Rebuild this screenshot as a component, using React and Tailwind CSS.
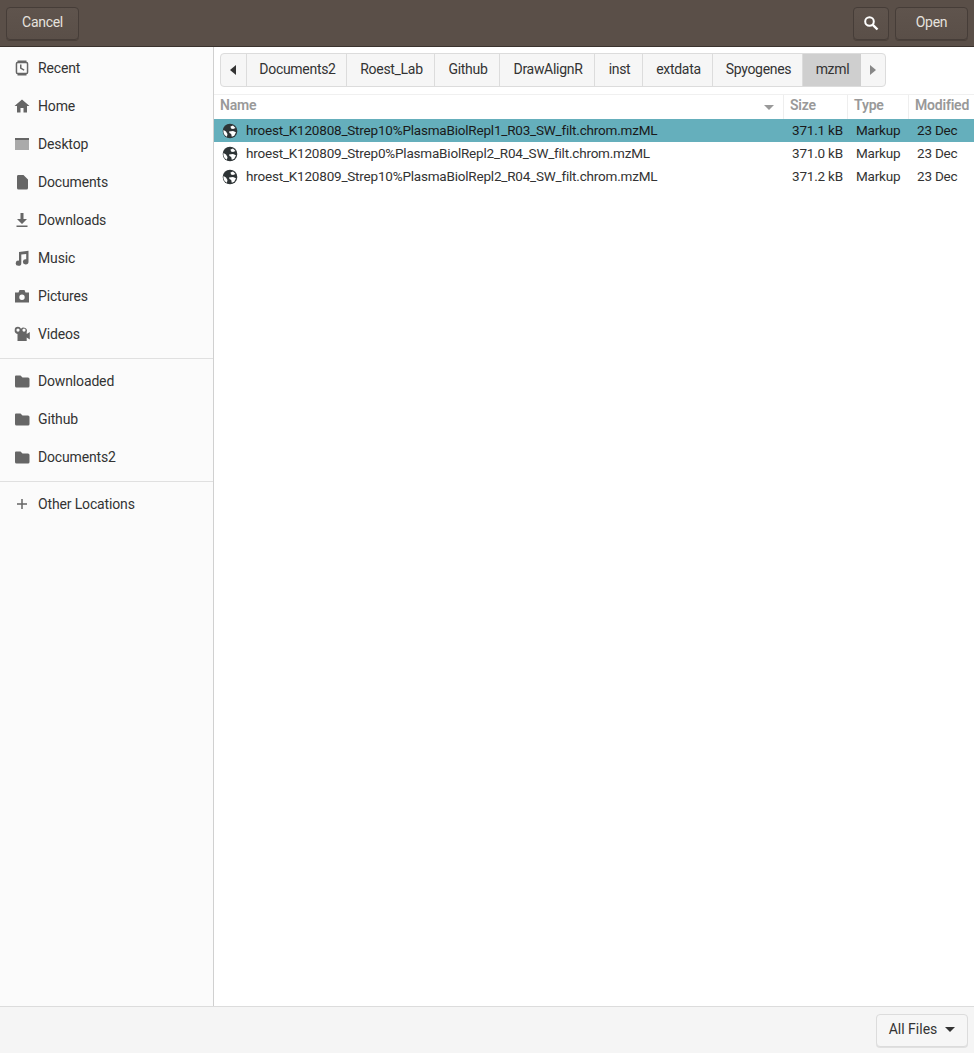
const font = "font-['Roboto','Noto_Sans',sans-serif]";

function Icon({ d, className = 'w-4 h-4 text-[#666]' }) {
  return (
    <svg viewBox="0 0 16 16" className={className} fill="currentColor" fillRule="evenodd">
      <path d={d} />
    </svg>
  );
}

const icons = {
  recent: 'M3.500 0.500h9v1.200a2 2 0 0 1 1.800 2v8.600a2 2 0 0 1-1.800 2v1.200h-9v-1.200a2 2 0 0 1-1.800-2V3.700a2 2 0 0 1 1.800-2zM3.700 3.200a.5.5 0 0 0-.5.5v8.600a.5.5 0 0 0 .5.5h8.600a.5.5 0 0 0 .5-.5V3.700a.5.5 0 0 0-.5-.5zM6 4.500h1.500v3.300l3 1.700-.7 1.200L6 8.600z',
  home: 'M8 1.500 15.500 8H13v6.500H9.500V10h-3v4.500H3V8H.5z',
  document: 'M4 1h5.500L14 5.500V14a1.500 1.500 0 0 1-1.500 1.500h-8A1.500 1.500 0 0 1 3 14V2.500A1.500 1.500 0 0 1 4 1z',
  download: 'M6.500 1h3v6H13l-5 5-5-5h3.500zM2.500 13.500h11V15h-11z',
  music: 'M5 2 14.500 .8v11a2.800 2.600 0 1 1-2.300-2.550V4L7.300 4.600v8.600A2.800 2.600 0 1 1 5 10.650z',
  camera: 'M5.500 2h5l1 2.500H15V14.500H1V4.500h3.500zM8 6.500a2.700 2.700 0 1 0 0 5.400 2.700 2.700 0 0 0 0-5.400z',
  video: 'M4 .8a3.300 3.300 0 0 1 3 2 3.300 3.300 0 0 1 5.700 3.200V8L15.800 6v7.500L12.700 11.500V15H3.500V8A3.500 3.500 0 0 1 .7 4.100 3.300 3.300 0 0 1 4 .8zM4 2.500a1.600 1.600 0 1 0 0 3.200 1.600 1.600 0 0 0 0-3.200zM10 2.500a1.600 1.600 0 1 0 0 3.200 1.600 1.600 0 0 0 0-3.200z',
  folder: 'M2 2.500h4.500L8.500 4.500H14a1.500 1.500 0 0 1 1.500 1.500v7a1.500 1.500 0 0 1-1.500 1.500H2.500A1.500 1.500 0 0 1 1 13V3.500a1 1 0 0 1 1-1z',
  plus: 'M7.250 3h1.500v4.250H13v1.500H8.750V13h-1.500V8.750H3v-1.500h4.250z',
};

function DesktopIcon() {
  return (
    <svg viewBox="0 0 16 16" className="w-4 h-4">
      <rect x="1" y="2" width="14" height="12" fill="#aaaaaa" />
      <rect x="1" y="2" width="14" height="2" fill="#666666" />
    </svg>
  );
}

function Globe() {
  return (
    <svg viewBox="0 0 16 16" className="w-4 h-4 shrink-0">
      <circle cx="8" cy="8" r="7.300" fill="#2e3436" />
      <path d="M8.500 3.500 11 2.500 13.500 5 11 6 9 5.500zM7 8.500 11 8l3 1.200-1.800 3.600-2.400 1-.6-2.800L7.500 10zM1.500 7 4 8.500l1.500 2.500-.6 2.800A6.500 6.500 0 0 1 1.500 7z" fill="#ffffff" />
    </svg>
  );
}

function SearchIcon() {
  return (
    <svg viewBox="0 0 16 16" className="w-4 h-4" fill="none" stroke="#ffffff">
      <circle cx="6.500" cy="6.500" r="4.300" strokeWidth="2" />
      <path d="M9.800 9.800 14.500 14.500" strokeWidth="2.400" />
    </svg>
  );
}

const places = [
  ['Recent', 'recent'],
  ['Home', 'home'],
  ['Desktop', 'desktop'],
  ['Documents', 'document'],
  ['Downloads', 'download'],
  ['Music', 'music'],
  ['Pictures', 'camera'],
  ['Videos', 'video'],
];

const bookmarks = ['Downloaded', 'Github', 'Documents2'];

const crumbs = [
  ['Documents2', 'w-[100px]'],
  ['Roest_Lab', 'w-[88px]'],
  ['Github', 'w-[65px]'],
  ['DrawAlignR', 'w-[95px]'],
  ['inst', 'w-[48px]'],
  ['extdata', 'w-[70px]'],
  ['Spyogenes', 'w-[90px]'],
];

const files = [
  { name: 'hroest_K120808_Strep10%PlasmaBiolRepl1_R03_SW_filt.chrom.mzML', size: '371.1 kB', selected: true },
  { name: 'hroest_K120809_Strep0%PlasmaBiolRepl2_R04_SW_filt.chrom.mzML', size: '371.0 kB' },
  { name: 'hroest_K120809_Strep10%PlasmaBiolRepl2_R04_SW_filt.chrom.mzML', size: '371.2 kB' },
];

function PlaceRow({ label, children }) {
  return (
    <div className="h-[38px] flex items-center pl-[14px] gap-[8px] text-[14px] tracking-[-0.15px] text-[#333]">
      <span className="w-4 h-4 flex items-center justify-center">{children}</span>
      <span>{label}</span>
    </div>
  );
}

function HeaderButton({ children, className = '' }) {
  return (
    <div className={`h-[33px] flex items-center justify-center pb-px rounded-[4px] border border-[#463d38] bg-gradient-to-b from-[#5f544d] to-[#5a4f48] text-[14px] tracking-[-0.3px] text-[#e6e2de] shadow-[0_1px_0_#4a403a] ${className}`}>
      {children}
    </div>
  );
}

export default function App() {
  return (
    <div className={`w-[974px] h-[1053px] flex flex-col bg-white overflow-hidden ${font}`}>
      <header className="h-[47px] shrink-0 flex items-center px-[6px] bg-[#5a4f48] border-b border-[#3a322d]">
        <HeaderButton className="w-[73px]">Cancel</HeaderButton>
        <div className="flex-1" />
        <HeaderButton className="w-[36px] mr-[6px]">
          <SearchIcon />
        </HeaderButton>
        <HeaderButton className="w-[73px]">Open</HeaderButton>
      </header>

      <div className="flex flex-1 min-h-0">
        <aside className="w-[214px] shrink-0 bg-[#fbfbfb] border-r border-[#d0d0d0] pt-[2px]">
          {places.map(([label, icon]) => (
            <PlaceRow key={label} label={label}>
              {icon === 'desktop' ? <DesktopIcon /> : <Icon d={icons[icon]} />}
            </PlaceRow>
          ))}
          <div className="h-px bg-[#e0e0e0] mt-[5px] mb-[3px]" />
          {bookmarks.map((label) => (
            <PlaceRow key={label} label={label}>
              <Icon d={icons.folder} />
            </PlaceRow>
          ))}
          <div className="h-px bg-[#e0e0e0] mt-[5px] mb-[3px]" />
          <PlaceRow label="Other Locations">
            <Icon d={icons.plus} />
          </PlaceRow>
        </aside>

        <main className="flex-1 min-w-0 flex flex-col">
          <div className="h-[47px] shrink-0 pt-[6px] pl-[6px]">
            <div className="w-[666px] h-[34px] flex rounded-[4px] border border-[#dcdcdc] bg-[#f6f6f6] text-[14px] tracking-[-0.3px] text-[#333] overflow-hidden">
              <div className="w-[26px] shrink-0 pr-[2px] flex items-center justify-center border-r border-[#dcdcdc]">
                <span className="w-0 h-0 border-y-[5px] border-y-transparent border-r-[6px] border-r-[#333]" />
              </div>
              {crumbs.map(([crumb, width]) => (
                <div key={crumb} className={`${width} shrink-0 pb-px pl-[2px] flex items-center justify-center border-r border-[#dcdcdc]`}>{crumb}</div>
              ))}
              <div className="w-[58px] shrink-0 pb-px pl-px flex items-center justify-center bg-[#cfcfcf]">mzml</div>
              <div className="flex-1 flex items-center justify-center">
                <span className="w-0 h-0 border-y-[5px] border-y-transparent border-l-[6px] border-l-[#888]" />
              </div>
            </div>
          </div>

          <div className="h-[25px] shrink-0 flex text-[14px] tracking-[-0.2px] font-semibold text-[#999] border-t border-[#f0f0f0]">
            <div className="w-[570px] pl-[6px] flex items-center justify-between pr-[9px] border-r border-[#eeeeee]">
              <span className="pb-[3px]">Name</span>
              <span className="w-0 h-0 border-x-[5px] border-x-transparent border-t-[5px] border-t-[#999]" />
            </div>
            <div className="w-[64px] pl-[6px] pb-[3px] flex items-center border-r border-[#eeeeee]">Size</div>
            <div className="w-[61px] pl-[6px] pb-[3px] flex items-center border-r border-[#eeeeee]">Type</div>
            <div className="flex-1 pl-[6px] pb-[3px] flex items-center whitespace-nowrap">Modified</div>
          </div>

          <div className="flex-1 text-[13.500px] tracking-[-0.2px]">
            {files.map((file) => (
              <div key={file.name} className={`h-[23px] flex items-center ${file.selected ? 'bg-[#65afbc] text-[#1a1a1a]' : 'text-[#333]'}`}>
                <div className="w-[570px] pl-[8px] flex items-center gap-[8px] whitespace-nowrap">
                  <Globe />
                  <span>{file.name}</span>
                </div>
                <div className="w-[72px] pl-[8px]">{file.size}</div>
                <div className="w-[61px]">Markup</div>
                <div className="flex-1 whitespace-nowrap">23 Dec</div>
              </div>
            ))}
          </div>
        </main>
      </div>

      <footer className="h-[47px] shrink-0 flex items-center justify-end pr-[6px] bg-[#f5f5f5] border-t border-[#dcdcdc]">
        <div className="w-[92px] h-[33px] flex items-center justify-center gap-[8px] pb-px rounded-[4px] border border-[#dcdcdc] bg-[#f6f6f6] text-[14px] text-[#333] shadow-[0_1px_0_#e0e0e0]">
          <span>All Files</span>
          <span className="w-0 h-0 border-x-[5px] border-x-transparent border-t-[5px] border-t-[#333]" />
        </div>
      </footer>
    </div>
  );
}
